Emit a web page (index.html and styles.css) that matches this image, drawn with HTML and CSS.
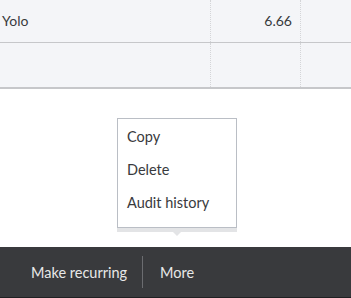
FILE: index.html
```html
<!DOCTYPE html>
<html lang="en">
<head>
    <meta charset="UTF-8">
    <title>Transaction actions</title>
    <link rel="stylesheet" href="styles.css">
</head>
<body>
    <div class="grid">
        <div class="row">
            <div class="cell cell-name">Yolo</div>
            <div class="cell cell-amount">6.66</div>
            <div class="cell cell-extra"></div>
        </div>
        <div class="row row-last">
            <div class="cell cell-name"></div>
            <div class="cell cell-amount"></div>
            <div class="cell cell-extra"></div>
        </div>
    </div>

    <div class="footer-bar">
        <button class="bar-button">Make recurring</button>
        <span class="bar-divider"></span>
        <button class="bar-button">More</button>
        <!-- menu opened from "More" -->
        <ul class="more-menu">
            <li>Copy</li>
            <li>Delete</li>
            <li>Audit history</li>
        </ul>
    </div>
</body>
</html>
```

FILE: styles.css
```css
html, body {
    margin: 0;
    padding: 0;
}
body {
    font-family: Lato, "Open Sans", sans-serif;
    font-size: 14px;
    color: #393a3d;
    background-color: #fff;
    height: 298px;
    display: flex;
    flex-direction: column;
    overflow: hidden;
}
.grid {
    background-color: #f4f5f8;
}
.row {
    display: flex;
    height: 42px;
    border-bottom: 1px solid #c6c7ca;
}
.row-last {
    height: 44px;
    border-bottom: 2px solid #c6c7ca;
}
.cell {
    display: flex;
    align-items: center;
    box-sizing: border-box;
}
.cell-name {
    width: 210px;
    padding-left: 2px;
    padding-bottom: 2px;
}
.cell-amount {
    width: 90px;
    justify-content: flex-end;
    padding-right: 8px;
    padding-bottom: 2px;
    border-left: 1px dotted #d4d5d8;
}
.cell-extra {
    flex: 1;
    border-left: 1px dotted #d4d5d8;
}
.footer-bar {
    position: relative;
    margin-top: auto;
    height: 50px;
    background-color: #393a3d;
    border-bottom: 1px solid #1f2022;
    display: flex;
    align-items: center;
    padding-left: 18px;
}
.bar-button {
    background: none;
    border: none;
    color: #e8e8e8;
    font-family: inherit;
    font-size: 14.5px;
    padding: 0 13px;
    cursor: pointer;
}
.bar-divider {
    width: 1px;
    height: 32px;
    background-color: #6b6c70;
    margin: 0 4px 0 2px;
}
.more-menu {
    position: absolute;
    left: 117px;
    bottom: 69px;
    width: 118px;
    margin: 0;
    padding: 1px 0 8px;
    list-style: none;
    background-color: #fff;
    border: 1px solid #babec5;
    box-shadow: 0 4px 0 #e3e4e6;
    font-size: 14.5px;
}
.more-menu li {
    line-height: 33px;
    padding-left: 9px;
    color: #393a3d;
}
.more-menu::after {
    content: "";
    position: absolute;
    left: 51px;
    top: calc(100% + 1px);
    width: 0;
    height: 0;
    border-left: 8px solid transparent;
    border-right: 8px solid transparent;
    border-top: 8px solid #e3e4e6;
}
```
